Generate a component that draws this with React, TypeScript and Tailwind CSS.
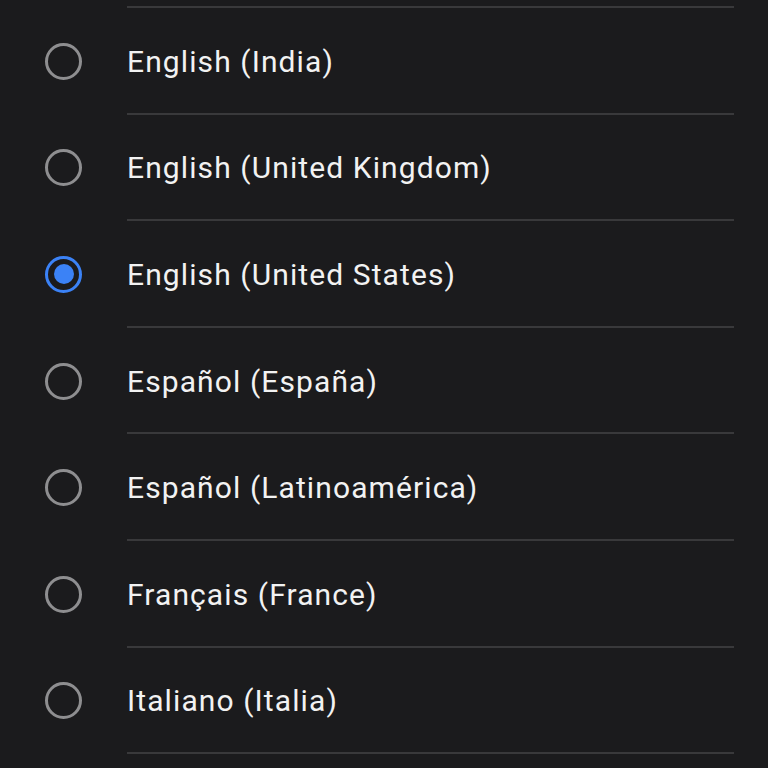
import React, { useState } from 'react';

const languages = [
  'English (India)',
  'English (United Kingdom)',
  'English (United States)',
  'Español (España)',
  'Español (Latinoamérica)',
  'Français (France)',
  'Italiano (Italia)',
];

const Radio: React.FC<{ checked: boolean }> = ({ checked }) => (
  <span
    className={`flex h-[37px] w-[37px] items-center justify-center rounded-full border-[3px] ${
      checked ? 'border-[#3b82f6]' : 'border-[#8e8e90]'
    }`}
  >
    {checked && <span className="h-[20px] w-[20px] rounded-full bg-[#3b82f6]" />}
  </span>
);

export default function App() {
  const [selected, setSelected] = useState('English (United States)');

  return (
    <div
      className="h-[768px] w-[768px] overflow-hidden bg-[#1b1b1d] text-[#f2f2f2]"
      style={{ fontFamily: 'Roboto, "Noto Sans", sans-serif' }}
    >
      <div className="ml-[127px] mr-[34px] h-[8px] border-b-2 border-[#39393b]" />
      {languages.map((lang) => (
        <button
          key={lang}
          onClick={() => setSelected(lang)}
          className="flex h-[106.6px] w-full items-stretch text-left"
        >
          <div className="flex w-[127px] shrink-0 items-center pl-[45px]">
            <Radio checked={lang === selected} />
          </div>
          <div className="mr-[34px] flex flex-1 items-center border-b-2 border-[#39393b] pt-[2px] text-[30px] tracking-[1.1px]">
            {lang}
          </div>
        </button>
      ))}
    </div>
  );
}
